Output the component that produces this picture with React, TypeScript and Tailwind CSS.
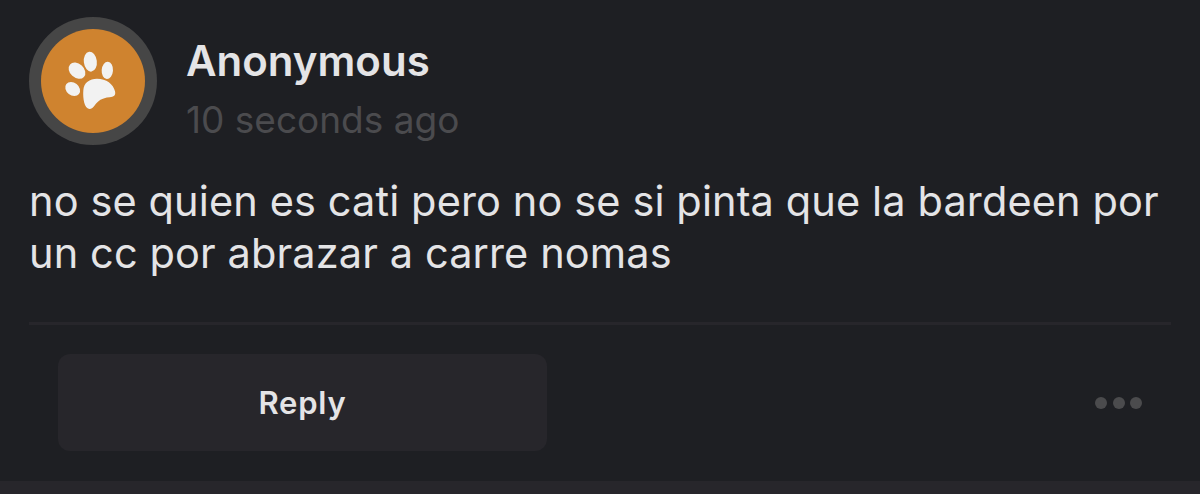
function PawAvatar() {
  return (
    <svg viewBox="27 21 384 384" className="h-32 w-32 shrink-0" aria-hidden="true">
      <circle cx="219" cy="213" r="192" fill="#464646" />
      <circle cx="219" cy="213" r="156" fill="#cf832f" />
      <g fill="#f2f2f2">
        <ellipse cx="158" cy="237" rx="24" ry="19" transform="rotate(38 158 237)" />
        <ellipse cx="171" cy="182" rx="28" ry="21" transform="rotate(42 171 182)" />
        <ellipse cx="211" cy="155" rx="19.5" ry="30" transform="rotate(-7 211 155)" />
        <ellipse cx="262" cy="181" rx="17" ry="26" transform="rotate(4 262 181)" />
        <path d="M190 241C191 218 209 206 231 206C259 206 280 222 285 244C288 257 281 261 269 262C245 264 234 273 225 285C219 293 215 297 208 297C193 296 188 265 190 241Z" />
      </g>
    </svg>
  );
}

function MoreButton() {
  return (
    <button type="button" aria-label="More" className="flex gap-[5.5px]">
      <span className="h-3 w-3 rounded-full bg-[#4b4b4d]" />
      <span className="h-3 w-3 rounded-full bg-[#4b4b4d]" />
      <span className="h-3 w-3 rounded-full bg-[#4b4b4d]" />
    </button>
  );
}

export default function App() {
  return (
    <div className="flex h-[494px] w-[1200px] flex-col overflow-hidden bg-[#1e1f23] font-['Inter',sans-serif] text-[#e4e4e6]">
      <article className="flex h-[481px] flex-col px-[29px] pt-[17px]">
        <header className="flex h-32 gap-[29px]">
          <PawAvatar />
          <div className="flex flex-col pt-[19px]">
            <h2 className="text-[42px] leading-[50px] font-semibold">Anonymous</h2>
            <p className="pt-[10px] text-[37px] leading-[48px] text-[#4b4b4e]">10 seconds ago</p>
          </div>
        </header>
        <p className="mt-[30px] h-[147px] text-[41.5px] leading-[52px] tracking-[0.12px] whitespace-nowrap">
          no se quien es cati pero no se si pinta que la bardeen por
          <br />
          un cc por abrazar a carre nomas
        </p>
        <footer className="flex items-center justify-between border-t-3 border-[#27262b] pt-[29px] pr-[29px] pl-[29px]">
          <button
            type="button"
            className="h-[97px] w-[489px] rounded-xl bg-[#27262b] pt-0.5 text-[31px] font-semibold tracking-[0.8px]"
          >
            Reply
          </button>
          <MoreButton />
        </footer>
      </article>
      <div className="flex-1 bg-[#27262b]" />
    </div>
  );
}
